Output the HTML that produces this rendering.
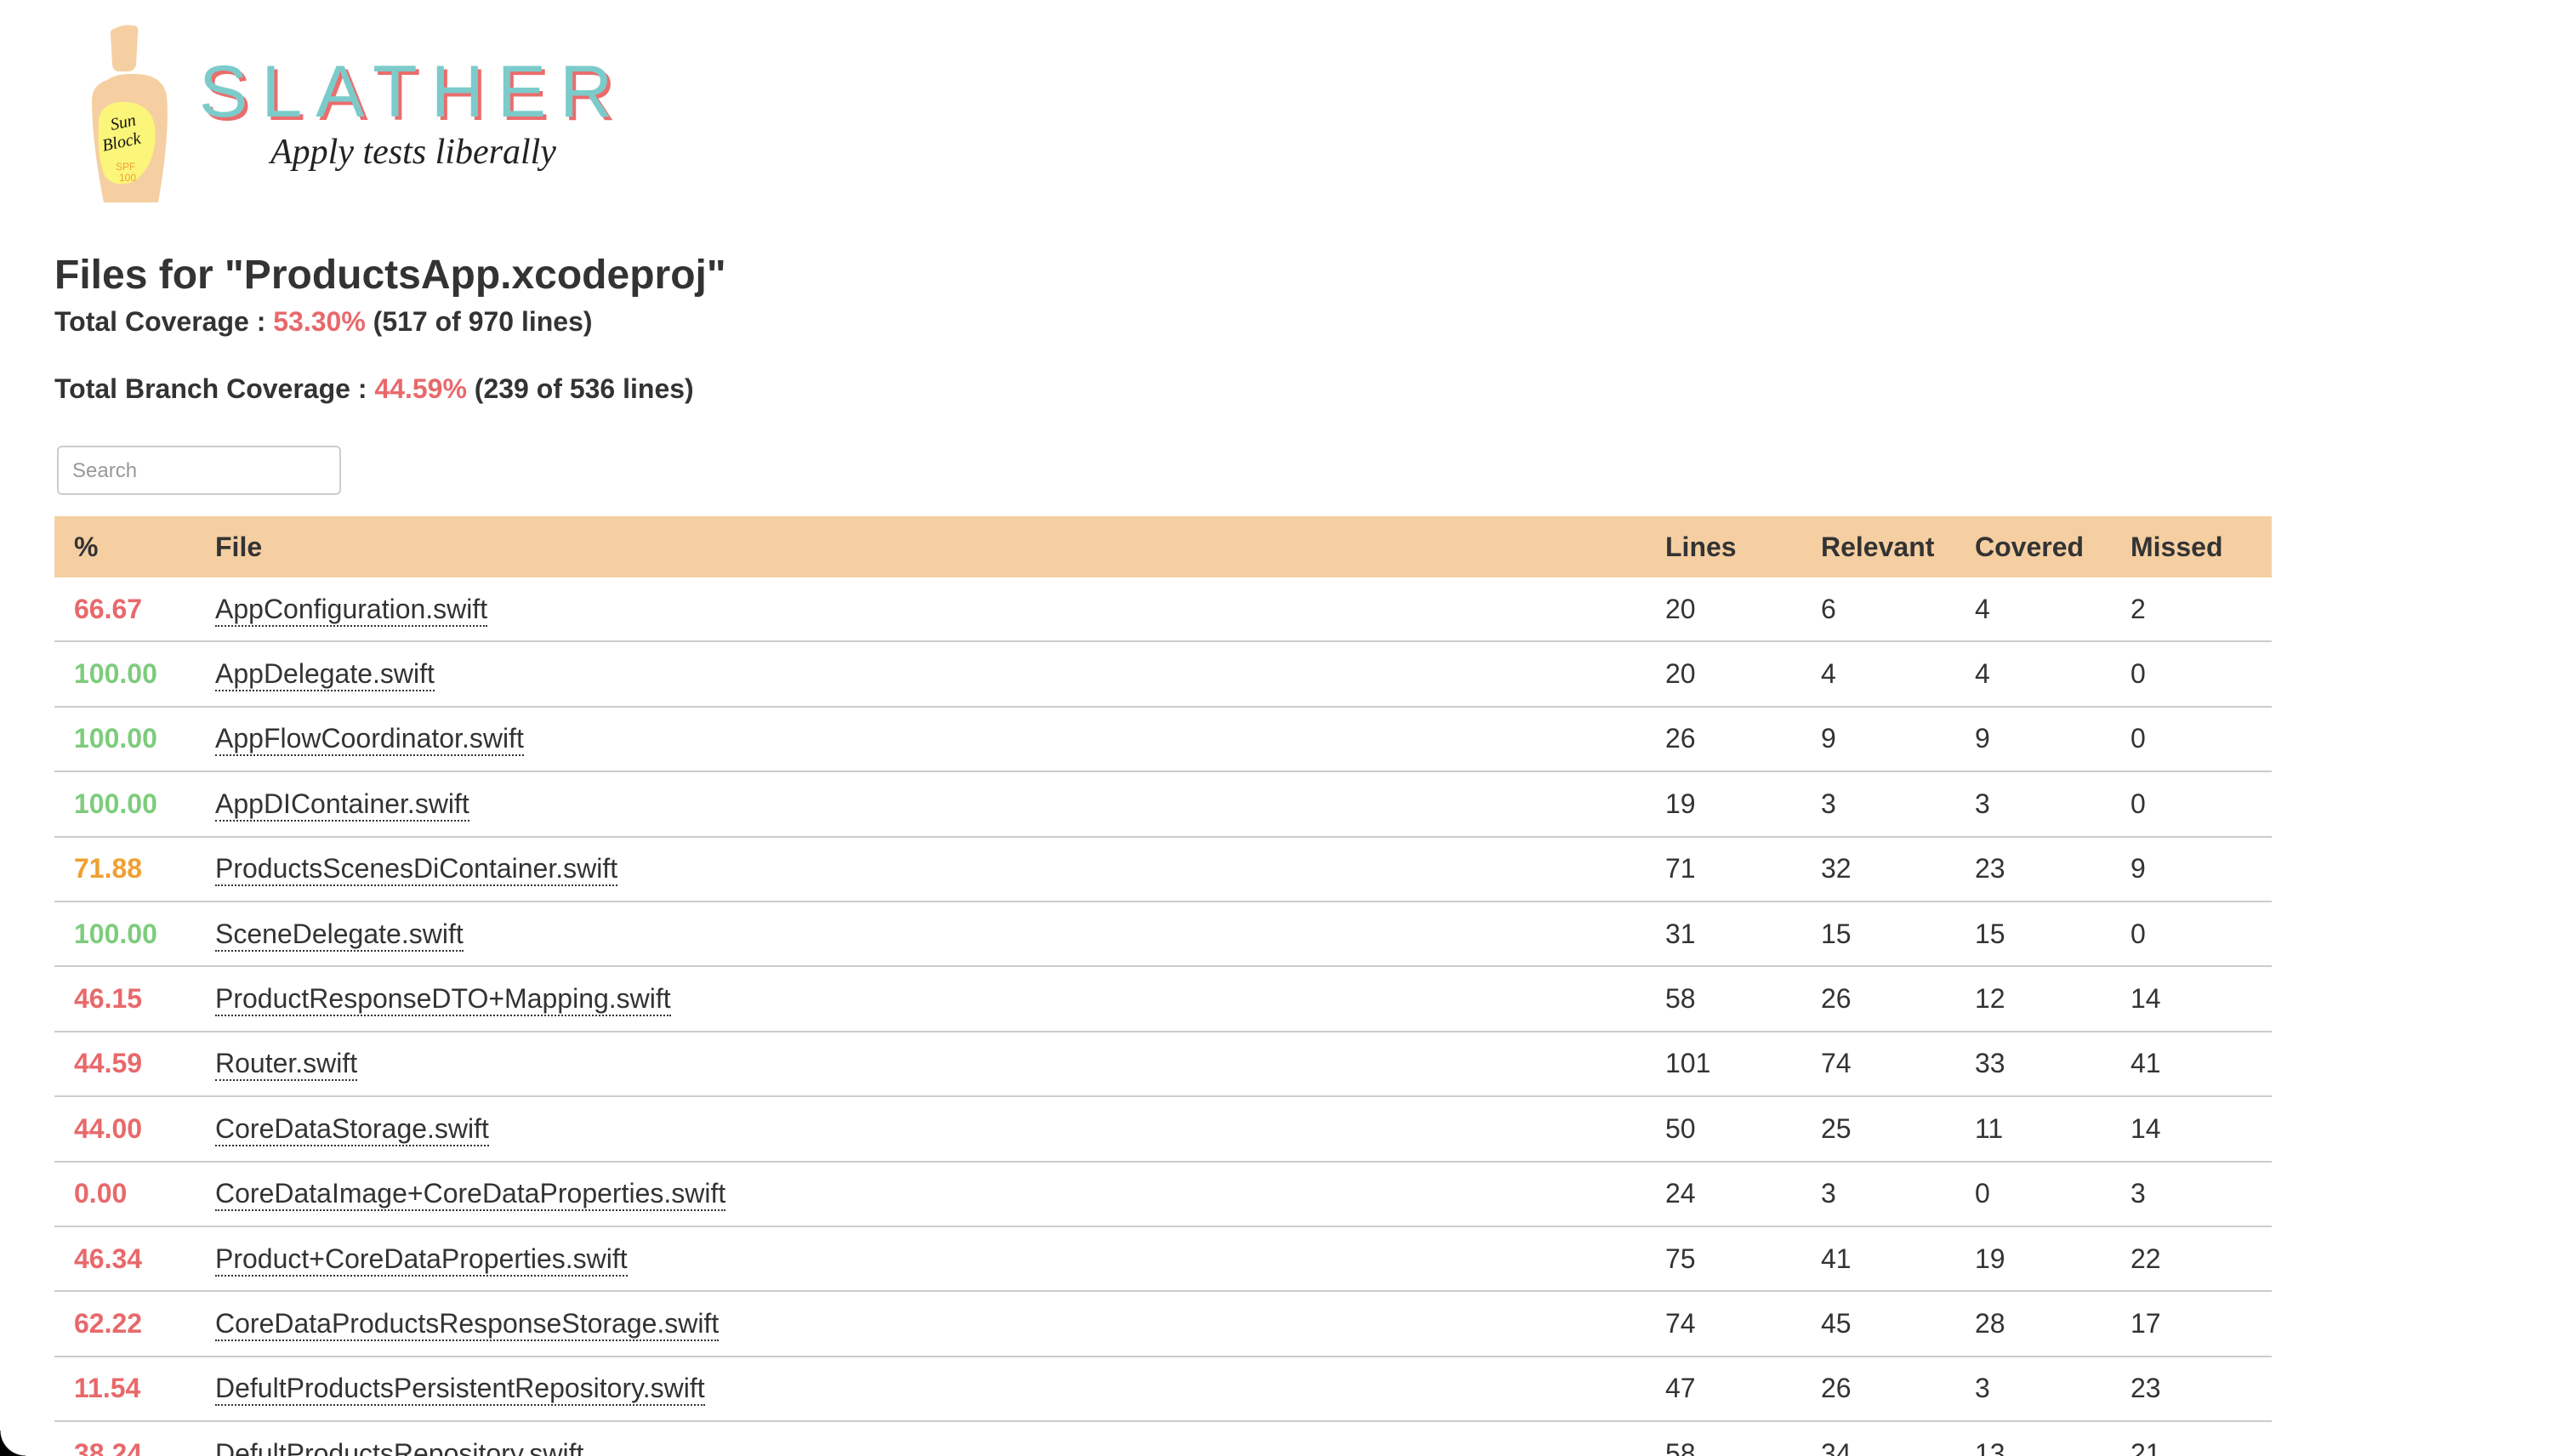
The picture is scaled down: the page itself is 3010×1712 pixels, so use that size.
<!DOCTYPE html>
<html><head><meta charset="utf-8">
<style>
html,body{margin:0;padding:0;background:#fff;width:3010px;height:1712px;overflow:hidden;position:relative;font-family:"Liberation Sans",Arial,sans-serif;color:#333}
.abs{position:absolute}
h1{position:absolute;left:64px;top:294px;margin:0;font-size:48px;font-weight:bold;line-height:60px;color:#333;white-space:nowrap}
.cov{position:absolute;left:64px;font-size:32px;font-weight:bold;line-height:40px;white-space:nowrap}
.red{color:#e8696b}.green{color:#7dcc7d}.orange{color:#f0a030}
.search{position:absolute;left:67px;top:524px;width:334px;height:58px;border:2px solid #ccc;border-radius:6px;box-sizing:border-box;font-size:24px;color:#999;padding-left:16px;line-height:56px}
table{position:absolute;left:64px;top:607px;width:2607px;border-collapse:collapse;table-layout:fixed;font-size:32px}
th{background:#f5cfa2;height:72px;text-align:left;font-weight:bold;padding:0}
td{height:74.4px;border-bottom:2px solid #ccc;padding:0;white-space:nowrap}
td:first-child,th:first-child{padding-left:23px}
td:first-child{font-weight:bold}
.f{border-bottom:2px dotted #333;padding-bottom:1px}
</style></head><body>
<svg class="abs" style="left:100px;top:28px" width="120" height="214" viewBox="0 0 120 214">
<path d="M34 6 Q44 0 56 2 Q64 2 62 12 L60 48 Q58 56 50 56 L40 56 Q33 56 32 48 L30 12 Q30 6 34 6Z" fill="#f5cfa2"/>
<path d="M26 66 Q40 56 70 60 Q92 64 96 84 Q100 130 86 210 L22 210 Q8 140 8 90 Q8 72 26 66Z" fill="#f5cfa2"/>
<path d="M16 120 Q14 96 40 92 Q76 90 82 120 Q86 160 62 182 Q40 196 24 180 Q14 160 16 120Z" fill="#fbf57a"/>
<text x="46" y="122" font-family="Liberation Serif,serif" font-style="italic" font-size="20" fill="#111" text-anchor="middle" transform="rotate(-12 46 122)">Sun</text>
<text x="44" y="145" font-family="Liberation Serif,serif" font-style="italic" font-size="20" fill="#111" text-anchor="middle" transform="rotate(-12 44 145)">Block</text>
<text x="36" y="172" font-family="Liberation Sans,sans-serif" font-size="12" fill="#f0a030">SPF</text>
<text x="40" y="185" font-family="Liberation Sans,sans-serif" font-size="12" fill="#f0a030">100</text>
</svg>
<div class="abs" style="left:238px;top:72px;font-size:86px;letter-spacing:16px;font-family:'Liberation Sans',sans-serif;color:#ea6d6c;line-height:80px">SLATHER</div>
<div class="abs" style="left:234px;top:68px;font-size:86px;letter-spacing:16px;font-family:'Liberation Sans',sans-serif;color:#7ccbcb;line-height:80px">SLATHER</div>
<div class="abs" style="left:318px;top:154px;font-size:42px;font-style:italic;font-family:'Liberation Serif',serif;color:#222;line-height:50px">Apply tests liberally</div>
<h1>Files for "ProductsApp.xcodeproj"</h1>
<div class="cov" style="top:358px">Total Coverage : <span class="red">53.30%</span> (517 of 970 lines)</div>
<div class="cov" style="top:437px">Total Branch Coverage : <span class="red">44.59%</span> (239 of 536 lines)</div>
<div class="search">Search</div>
<table>
<colgroup><col style="width:189px"><col style="width:1705px"><col style="width:183px"><col style="width:181px"><col style="width:183px"><col style="width:166px"></colgroup>
<tr><th>%</th><th>File</th><th>Lines</th><th>Relevant</th><th>Covered</th><th>Missed</th></tr>
<tr><td class="red">66.67</td><td><span class="f">AppConfiguration.swift</span></td><td>20</td><td>6</td><td>4</td><td>2</td></tr>
<tr><td class="green">100.00</td><td><span class="f">AppDelegate.swift</span></td><td>20</td><td>4</td><td>4</td><td>0</td></tr>
<tr><td class="green">100.00</td><td><span class="f">AppFlowCoordinator.swift</span></td><td>26</td><td>9</td><td>9</td><td>0</td></tr>
<tr><td class="green">100.00</td><td><span class="f">AppDIContainer.swift</span></td><td>19</td><td>3</td><td>3</td><td>0</td></tr>
<tr><td class="orange">71.88</td><td><span class="f">ProductsScenesDiContainer.swift</span></td><td>71</td><td>32</td><td>23</td><td>9</td></tr>
<tr><td class="green">100.00</td><td><span class="f">SceneDelegate.swift</span></td><td>31</td><td>15</td><td>15</td><td>0</td></tr>
<tr><td class="red">46.15</td><td><span class="f">ProductResponseDTO+Mapping.swift</span></td><td>58</td><td>26</td><td>12</td><td>14</td></tr>
<tr><td class="red">44.59</td><td><span class="f">Router.swift</span></td><td>101</td><td>74</td><td>33</td><td>41</td></tr>
<tr><td class="red">44.00</td><td><span class="f">CoreDataStorage.swift</span></td><td>50</td><td>25</td><td>11</td><td>14</td></tr>
<tr><td class="red">0.00</td><td><span class="f">CoreDataImage+CoreDataProperties.swift</span></td><td>24</td><td>3</td><td>0</td><td>3</td></tr>
<tr><td class="red">46.34</td><td><span class="f">Product+CoreDataProperties.swift</span></td><td>75</td><td>41</td><td>19</td><td>22</td></tr>
<tr><td class="red">62.22</td><td><span class="f">CoreDataProductsResponseStorage.swift</span></td><td>74</td><td>45</td><td>28</td><td>17</td></tr>
<tr><td class="red">11.54</td><td><span class="f">DefultProductsPersistentRepository.swift</span></td><td>47</td><td>26</td><td>3</td><td>23</td></tr>
<tr><td class="red">38.24</td><td><span class="f">DefultProductsRepository.swift</span></td><td>58</td><td>34</td><td>13</td><td>21</td></tr>
</table>
<div class="abs" style="left:0;top:1682px;width:30px;height:30px;background:radial-gradient(circle at 30px 0,#fff 29px,#000 30px)"></div>
</body></html>
